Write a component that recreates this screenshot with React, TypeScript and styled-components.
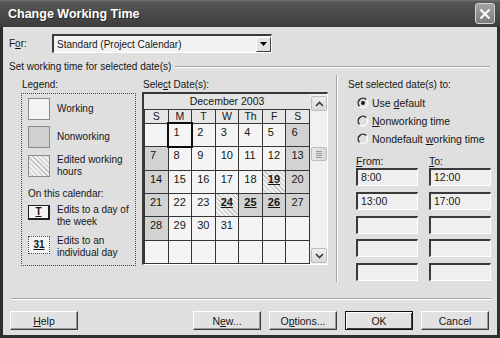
import React from "react";
import styled, { createGlobalStyle, css } from "styled-components";

const GlobalStyle = createGlobalStyle`
  html, body { margin: 0; padding: 0; background: #ffffff; }
  body {
    font-family: "Liberation Sans", Arial, sans-serif;
    font-size: 10px;
    color: #161616;
  }
  * { box-sizing: border-box; }
`;

const Window = styled.div`
  width: 500px;
  height: 338px;
  display: flex;
  flex-direction: column;
  overflow: hidden;
`;

const TitleBar = styled.div`
  height: 27px;
  flex: none;
  display: flex;
  align-items: center;
  justify-content: space-between;
  padding: 0 5px 0 8px;
  background: linear-gradient(#727272 0, #585858 2px, #4c4c4c 45%, #3c3c3c 100%);
`;

const Title = styled.div`
  color: #ffffff;
  font-weight: bold;
  font-size: 12.5px;
  text-shadow: 1px 1px 0 #2a2a2a;
`;

const CloseButton = styled.div`
  width: 20px;
  height: 21px;
  border: 1px solid #d4d4d4;
  border-radius: 3px;
  background: linear-gradient(#a4a4a4, #7c7c7c);
  display: flex;
  align-items: center;
  justify-content: center;
`;

const Frame = styled.div`
  flex: 1;
  display: flex;
  flex-direction: column;
  background: #dfdfdf;
  border: 3px solid #2e2e2e;
  border-top: 0;
  padding: 0 6px;
`;

const ForRow = styled.div`
  margin-top: 7px;
  height: 19px;
  display: flex;
  align-items: center;
`;

const ForLabel = styled.div`
  width: 43px;
`;

const Sunken = css`
  border-top: 2px solid #3a3a3a;
  border-left: 2px solid #3a3a3a;
  border-right: 1px solid #ffffff;
  border-bottom: 1px solid #ffffff;
`;

const Select = styled.div`
  ${Sunken};
  width: 220px;
  height: 19px;
  display: flex;
  align-items: center;
  justify-content: space-between;
  background: #f2f2f2;
  padding-left: 3px;
`;

const SelectArrow = styled.div`
  width: 15px;
  height: 15px;
  background: #e2e2e2;
  border: 1px solid;
  border-color: #ffffff #404040 #404040 #ffffff;
  display: flex;
  align-items: center;
  justify-content: center;
`;

const GroupHeader = styled.div`
  margin-top: 6px;
  height: 14px;
  display: flex;
  align-items: center;
`;

const GroupLine = styled.div`
  flex: 1;
  margin: 1px 1px 0 4px;
  border-top: 1px solid #a2a2a2;
  border-bottom: 1px solid #ffffff;
`;

const Main = styled.div`
  display: flex;
  height: 212px;
`;

const Column = styled.div<{ $left: number; $width?: number }>`
  margin-left: ${({ $left }) => $left}px;
  width: ${({ $width }) => ($width ? `${$width}px` : "auto")};
  flex: ${({ $width }) => ($width ? "none" : 1)};
  display: flex;
  flex-direction: column;
`;

const Caption = styled.div`
  margin-top: 6px;
  height: 12px;
  line-height: 12px;
  padding-left: 1px;
`;

const LegendBox = styled.div`
  margin-top: 2px;
  height: 173px;
  border: 1px dotted #4a4a4a;
  padding: 4px 0 0 6px;
  display: flex;
  flex-direction: column;
`;

const LegendItem = styled.div<{ $gap?: number }>`
  display: flex;
  align-items: center;
  gap: 7px;
  margin-top: ${({ $gap }) => $gap ?? 0}px;
  line-height: 12px;
`;

const Hatch = css`
  background: repeating-linear-gradient(45deg, #eeeeee 0 2.4px, #c2c2c2 2.4px 3.4px);
`;

const Swatch = styled.div<{ $kind: "work" | "off" | "edit" }>`
  width: 22px;
  height: 22px;
  flex: none;
  border: 1px solid #8a8a8a;
  ${({ $kind }) =>
    $kind === "work"
      ? css`background: #f3f3f3;`
      : $kind === "off"
      ? css`background: #d0d0d0;`
      : Hatch}
`;

const LegendNote = styled.div`
  margin-top: 10px;
  line-height: 12px;
`;

const EditRow = styled.div<{ $gap: number }>`
  display: flex;
  align-items: flex-start;
  gap: 7px;
  margin-top: ${({ $gap }) => $gap}px;
  line-height: 12px;
`;

const EditMark = styled.div<{ $dotted?: boolean }>`
  width: 22px;
  height: ${({ $dotted }) => ($dotted ? 18 : 15)}px;
  flex: none;
  margin-top: 1px;
  display: flex;
  align-items: center;
  justify-content: center;
  font-weight: bold;
  font-size: 10px;
  text-decoration: underline;
  background: #f3f3f3;
  ${({ $dotted }) =>
    $dotted
      ? css`border: 1px dotted #505050;`
      : css`
          border: 1px solid #202020;
          border-right-width: 2px;
          border-bottom-width: 2px;
        `}
`;

const CalendarBox = styled.div`
  ${Sunken};
  margin-top: 1px;
  height: 173px;
  display: flex;
  background: #ececec;
`;

const CalendarArea = styled.div`
  width: 166px;
  display: flex;
  flex-direction: column;
`;

const MonthHeader = styled.div`
  height: 15px;
  line-height: 15px;
  text-align: center;
  font-size: 10.5px;
  background: #e4e4e4;
`;

const DayGrid = styled.div`
  flex: 1;
  display: grid;
  grid-template-columns: repeat(7, 1fr);
  grid-template-rows: 13px repeat(6, 1fr);
  gap: 1px;
  padding: 1px;
  background: #363636;
`;

const DayHead = styled.div`
  background: #e6e6e6;
  text-align: center;
  line-height: 13px;
  font-size: 10.5px;
`;

type CellKind = "work" | "off" | "edit" | "empty";

const DayCell = styled.div<{ $kind: CellKind; $bold?: boolean; $selected?: boolean }>`
  position: relative;
  padding: 2px 0 0 5px;
  font-size: 11px;
  line-height: 12px;
  ${({ $kind }) =>
    $kind === "off"
      ? css`background: #d2d2d2;`
      : $kind === "edit"
      ? Hatch
      : css`background: #f4f4f4;`}
  ${({ $bold }) =>
    $bold &&
    css`
      font-weight: bold;
      text-decoration: underline;
    `}
  ${({ $selected }) =>
    $selected &&
    css`
      outline: 2px solid #0c0c0c;
      z-index: 1;
    `}
`;

const ScrollBar = styled.div`
  width: 16px;
  margin-left: 1px;
  display: flex;
  flex-direction: column;
  padding: 2px 0 1px;
  background: #f1f1f1;
`;

const ScrollButton = styled.div`
  height: 15px;
  border: 1px solid #bdbdbd;
  border-radius: 2px;
  background: linear-gradient(#eeeeee, #dadada);
  display: flex;
  align-items: center;
  justify-content: center;
`;

const ScrollTrack = styled.div`
  flex: 1;
  display: flex;
  flex-direction: column;
`;

const ScrollThumb = styled.div`
  margin-top: 36px;
  height: 14px;
  border: 1px solid #bdbdbd;
  border-radius: 2px;
  background: linear-gradient(90deg, #e9e9e9, #d8d8d8);
  display: flex;
  flex-direction: column;
  align-items: center;
  justify-content: center;
  gap: 1px;
`;

const Grip = styled.div`
  width: 6px;
  height: 1px;
  background: #9a9a9a;
`;

const Separator = styled.div`
  margin-left: 8px;
  margin-top: 2px;
  width: 2px;
  height: 207px;
  border-left: 1px solid #a2a2a2;
  border-right: 1px solid #ffffff;
`;

const RadioList = styled.div`
  margin-top: 3px;
  padding-left: 10px;
  display: flex;
  flex-direction: column;
`;

const RadioRow = styled.div`
  height: 18px;
  display: flex;
  align-items: center;
  gap: 3px;
  font-size: 10.5px;
`;

const TimeHeader = styled.div`
  margin: 7px 0 0 9px;
  height: 13px;
  display: grid;
  grid-template-columns: 62px 62px;
  column-gap: 11px;
  line-height: 12px;
  font-size: 10.5px;
`;

const TimeGrid = styled.div`
  margin-left: 9px;
  display: grid;
  grid-template-columns: 62px 62px;
  column-gap: 11px;
  row-gap: 5.75px;
  grid-auto-rows: 18px;
`;

const TimeBox = styled.div`
  ${Sunken};
  background: #efefef;
  padding-left: 3px;
  line-height: 14px;
  font-size: 10.5px;
`;

const BottomLine = styled.div`
  margin: 13px 0 0 2px;
  border-top: 1px solid #a2a2a2;
  border-bottom: 1px solid #ffffff;
`;

const ButtonRow = styled.div`
  margin-top: 11px;
  display: flex;
  align-items: center;
  gap: 8px;
  padding: 0 2px 0 1px;
`;

const Spacer = styled.div`
  flex: 1;
`;

const Button = styled.div<{ $default?: boolean }>`
  width: 68px;
  height: 19px;
  display: flex;
  align-items: center;
  justify-content: center;
  font-size: 10.5px;
  background: #e2e2e2;
  border: 1px solid;
  border-color: #ffffff #3c3c3c #3c3c3c #ffffff;
  box-shadow: inset -1px -1px 0 #9a9a9a;
  ${({ $default }) =>
    $default &&
    css`
      border: 1px solid #111111;
      box-shadow: inset 1px 1px 0 #ffffff, inset -1px -1px 0 #3c3c3c;
    `}
`;

const Radio: React.FC<{ checked?: boolean }> = ({ checked }) => (
  <svg width="12" height="12" viewBox="0 0 12 12">
    <circle cx="6" cy="6" r="4.6" fill="#dfdfdf" />
    <path d="M2.6 9.4 A4.8 4.8 0 0 1 9.4 2.6" fill="none" stroke="#303030" strokeWidth="1.5" />
    <path d="M9.4 2.6 A4.8 4.8 0 0 1 2.6 9.4" fill="none" stroke="#ffffff" strokeWidth="1.2" />
    {checked && <circle cx="6" cy="6" r="1.9" fill="#111" />}
  </svg>
);

const Chevron: React.FC<{ down?: boolean }> = ({ down }) => (
  <svg width="9" height="6" viewBox="0 0 9 6">
    <path
      d={down ? "M1 1 L4.5 4.5 L8 1" : "M1 5 L4.5 1.5 L8 5"}
      fill="none"
      stroke="#3a3a3a"
      strokeWidth="1.6"
    />
  </svg>
);

type Day = { n?: number; kind: CellKind; bold?: boolean };

const offDays = [6, 7, 13, 14, 20, 21, 25, 26, 27, 28];
const editDays = [19, 24];
const boldDays = [19, 24, 25, 26];

// December 2003 starts on a Monday, so the first cell is blank
const days: Day[] = Array.from({ length: 42 }, (_, n) => {
  if (n < 1 || n > 31) return { kind: "empty" };
  const kind: CellKind = editDays.includes(n) ? "edit" : offDays.includes(n) ? "off" : "work";
  return { n, kind, bold: boldDays.includes(n) };
});

const weekDays = ["S", "M", "T", "W", "Th", "F", "S"];

const times = [
  ["8:00", "12:00"],
  ["13:00", "17:00"],
  ["", ""],
  ["", ""],
  ["", ""],
];

export default function App() {
  return (
    <>
      <GlobalStyle />
      <Window>
        <TitleBar>
          <Title>Change Working Time</Title>
          <CloseButton>
            <svg width="12" height="12" viewBox="0 0 12 12">
              <path d="M1.5 1.5 L10.5 10.5 M10.5 1.5 L1.5 10.5" stroke="#fff" strokeWidth="2" />
            </svg>
          </CloseButton>
        </TitleBar>
        <Frame>
          <ForRow>
            <ForLabel>
              F<u>o</u>r:
            </ForLabel>
            <Select>
              <span>Standard (Project Calendar)</span>
              <SelectArrow>
                <svg width="7" height="4" viewBox="0 0 7 4">
                  <path d="M0 0 H7 L3.5 4 Z" fill="#000" />
                </svg>
              </SelectArrow>
            </Select>
          </ForRow>

          <GroupHeader>
            <span>Set working time for selected date(s)</span>
            <GroupLine />
          </GroupHeader>

          <Main>
            <Column $left={12} $width={115}>
              <Caption>Legend:</Caption>
              <LegendBox>
                <LegendItem>
                  <Swatch $kind="work" />
                  <span>Working</span>
                </LegendItem>
                <LegendItem $gap={6}>
                  <Swatch $kind="off" />
                  <span>Nonworking</span>
                </LegendItem>
                <LegendItem $gap={6}>
                  <Swatch $kind="edit" />
                  <span>
                    Edited working
                    <br />
                    hours
                  </span>
                </LegendItem>
                <LegendNote>On this calendar:</LegendNote>
                <EditRow $gap={4}>
                  <EditMark>T</EditMark>
                  <span>
                    Edits to a day of
                    <br />
                    the week
                  </span>
                </EditRow>
                <EditRow $gap={7}>
                  <EditMark $dotted>31</EditMark>
                  <span>
                    Edits to an
                    <br />
                    individual day
                  </span>
                </EditRow>
              </LegendBox>
            </Column>

            <Column $left={6} $width={186}>
              <Caption>
                Sele<u>c</u>t Date(s):
              </Caption>
              <CalendarBox>
                <CalendarArea>
                  <MonthHeader>December 2003</MonthHeader>
                  <DayGrid>
                    {weekDays.map((d, i) => (
                      <DayHead key={i}>{d}</DayHead>
                    ))}
                    {days.map((d, i) => (
                      <DayCell key={i} $kind={d.kind} $bold={d.bold} $selected={d.n === 1}>
                        {d.n}
                      </DayCell>
                    ))}
                  </DayGrid>
                </CalendarArea>
                <ScrollBar>
                  <ScrollButton>
                    <Chevron />
                  </ScrollButton>
                  <ScrollTrack>
                    <ScrollThumb>
                      <Grip />
                      <Grip />
                      <Grip />
                      <Grip />
                    </ScrollThumb>
                  </ScrollTrack>
                  <ScrollButton>
                    <Chevron down />
                  </ScrollButton>
                </ScrollBar>
              </CalendarBox>
            </Column>

            <Separator />

            <Column $left={9}>
              <Caption>Set selected date(s) to:</Caption>
              <RadioList>
                <RadioRow>
                  <Radio checked />
                  <span>
                    Use <u>d</u>efault
                  </span>
                </RadioRow>
                <RadioRow>
                  <Radio />
                  <span>
                    <u>N</u>onworking time
                  </span>
                </RadioRow>
                <RadioRow>
                  <Radio />
                  <span>
                    Nondefault <u>w</u>orking time
                  </span>
                </RadioRow>
              </RadioList>
              <TimeHeader>
                <span>
                  <u>F</u>rom:
                </span>
                <span>
                  <u>T</u>o:
                </span>
              </TimeHeader>
              <TimeGrid>
                {times.flat().map((t, i) => (
                  <TimeBox key={i}>{t}</TimeBox>
                ))}
              </TimeGrid>
            </Column>
          </Main>

          <BottomLine />

          <ButtonRow>
            <Button>
              <u>H</u>elp
            </Button>
            <Spacer />
            <Button>
              N<u>e</u>w...
            </Button>
            <Button>
              O<u>p</u>tions...
            </Button>
            <Button $default>OK</Button>
            <Button>Cancel</Button>
          </ButtonRow>
        </Frame>
      </Window>
    </>
  );
}
